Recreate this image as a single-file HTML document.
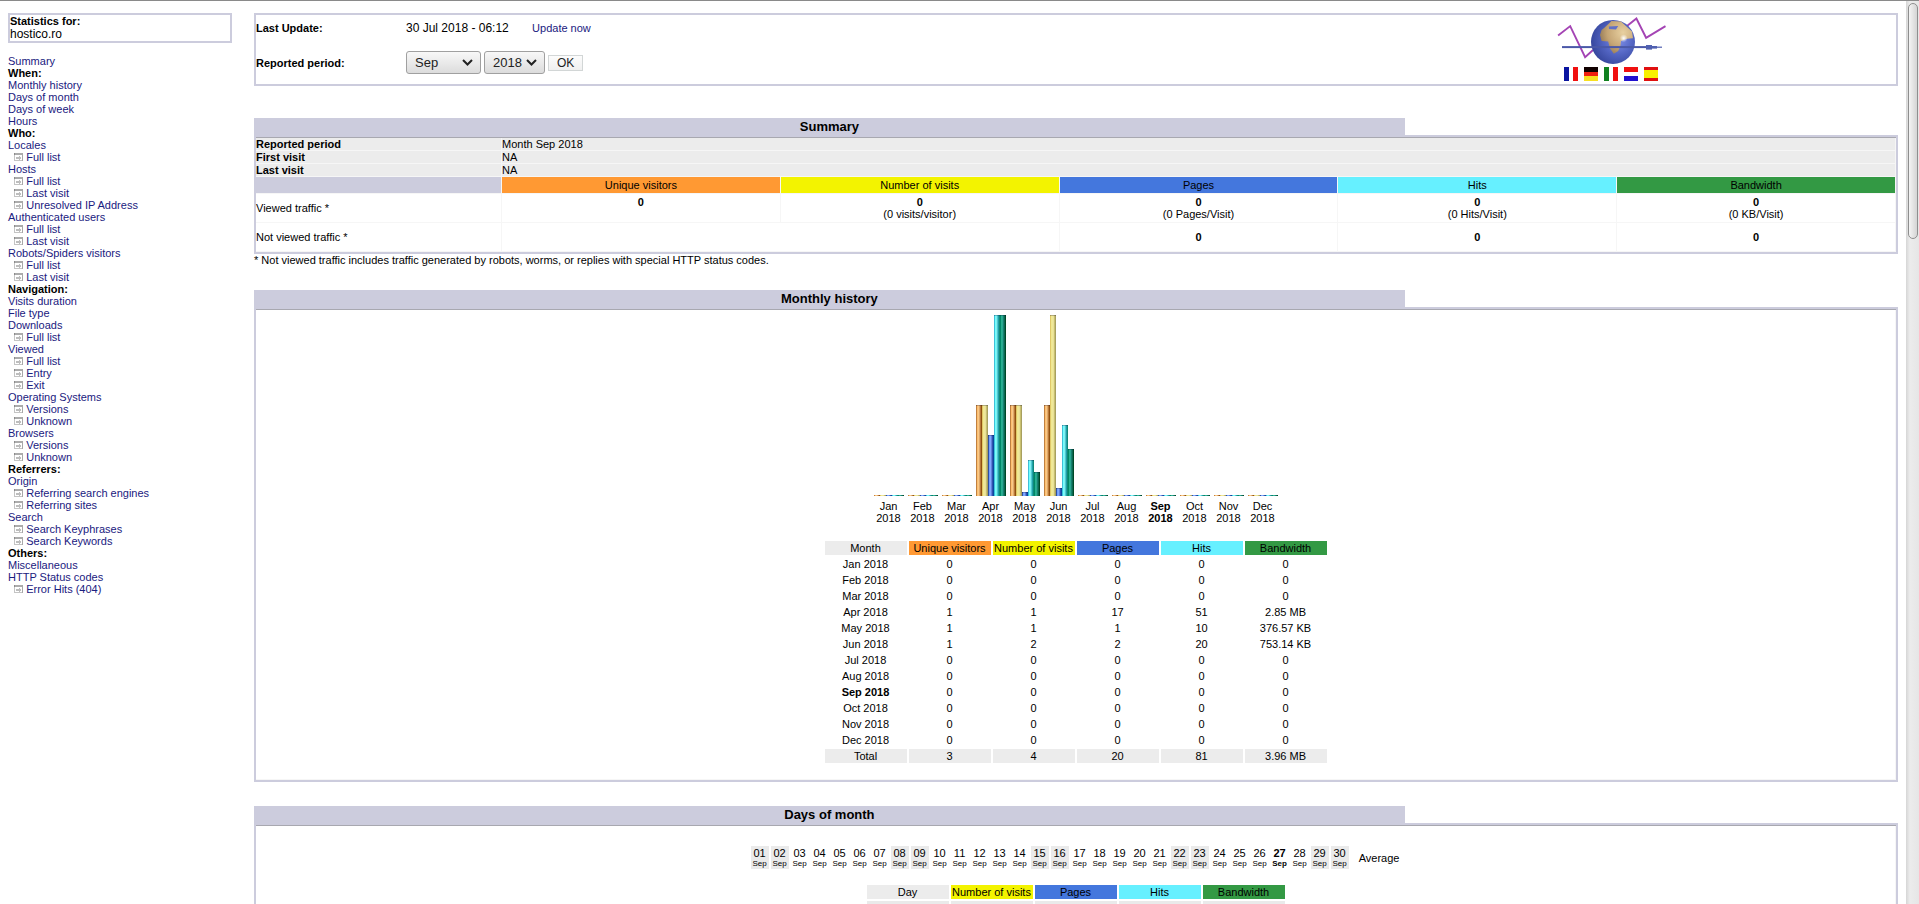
<html><head><meta charset="utf-8">
<style>
html,body{margin:0;padding:0;background:#fff;overflow:hidden;}
body{width:1919px;height:904px;position:relative;font:11px "Liberation Sans",sans-serif;}
#topline{position:absolute;left:0;top:0;width:1919px;height:1px;background:#8a8a8a;}
.frame{position:absolute;top:1px;overflow:hidden;}
#left{left:0;width:240px;height:903px;}
#main{left:246px;width:1660px;height:903px;}
.fb{margin:0 8px;}
#sb{position:absolute;left:1906px;top:1px;width:13px;height:903px;background:linear-gradient(to right,#d6d6d6,#ececec 30%,#e6e6e6);}
#thumb{position:absolute;left:2px;top:2px;width:8px;height:234px;border:1px solid #8e8e8e;border-radius:5px;background:linear-gradient(to right,#f4f4f4,#d4d4d4);}
.aws_border{border-collapse:collapse;background-color:#CCCCDD;padding:1px;margin-top:0;margin-bottom:0;}
.aws_title{font:bold 13px "Liberation Sans",sans-serif;background-color:#CCCCDD;text-align:center;margin:0;padding:1px;color:#000;}
.aws_blank{font:13px "Liberation Sans",sans-serif;background-color:#FFFFFF;text-align:center;margin-bottom:0;padding:1px;}
.aws_data{background-color:#FFFFFF;border-top-width:1px;border-left-width:0;border-right-width:0;border-bottom-width:0;}
.aws_formfield{font:13px "Liberation Sans",sans-serif;}
.aws_button{font-family:"Liberation Sans",sans-serif;font-size:12px;border:1px solid #ccd7e0;background:#fff;}
th{border-color:#ECECEC;border-left-width:0;border-right-width:1px;border-top-width:0;border-bottom-width:1px;padding:1px 2px 1px 1px;font:11px "Liberation Sans",sans-serif;text-align:center;color:#000;}
td{border-color:#ECECEC;border-left-width:0;border-right-width:1px;border-top-width:0;border-bottom-width:1px;font:11px "Liberation Sans",sans-serif;text-align:center;color:#000;}
td.aws{text-align:left;padding:0;}
td.awsm{border-width:0;text-align:left;padding:0;}
b{font-weight:bold;}
a{font:11px "Liberation Sans",sans-serif;color:#1a2080;text-decoration:none;}
.ico{display:inline-block;vertical-align:baseline;}
.b{display:inline-block;width:6px;vertical-align:bottom;}
.b0{display:inline-block;width:4px;height:0;vertical-align:bottom;}
.vu{background:linear-gradient(to right,#c08040 0px 1px,#ffc070 1px 2px,#f8c888 2px 3px,#e0a868 3px 4px,#b87838 4px 5px,#905010 5px 6px);}
.vv{background:linear-gradient(to right,#e0c868 0px 1px,#f0e890 1px 2px,#f0e898 2px 3px,#e8e098 3px 4px,#c8c070 4px 5px,#a8a060 5px 6px);}
.vp{background:linear-gradient(to right,#3050a0 0px 1px,#70a0ff 1px 2px,#80a8ff 2px 3px,#6080d8 3px 4px,#3050b0 4px 5px,#0848a0 5px 6px);}
.vh{background:linear-gradient(to right,#40c0d8 0px 1px,#70ffff 1px 2px,#80f0f0 2px 3px,#50c8d0 3px 4px,#20a0a8 4px 5px,#108878 5px 6px);}
.vk{background:linear-gradient(to right,#008868 0px 1px,#28b090 1px 2px,#28a890 2px 3px,#188070 3px 4px,#0a6850 4px 5px,#004828 5px 6px);}
.b{box-shadow:inset 0 1px 0 rgba(0,0,40,0.25);}
.b.z{box-shadow:none;}
.sel{display:inline-block;position:relative;box-sizing:border-box;height:23px;line-height:21px;padding-left:8px;border:1px solid #a0a0a0;border-radius:3px;background:linear-gradient(#f8f8f8,#dcdcdc);font-size:13px;color:#222;vertical-align:middle;}
.chev{position:absolute;right:7px;top:7px;}
.btn{display:inline-block;box-sizing:border-box;width:35px;height:16px;border:1px solid #d2d6d6;background:linear-gradient(#fcfcfc,#f0f0f0);color:#222;font-size:12px;text-align:center;vertical-align:middle;}

#logo{position:absolute;left:1550px;top:12px;}

table[border="1"]>tbody>tr>td{border-color:#f6f6f6;}
table.aws_data[border="1"]{border-top-color:#a8a8b0;}

</style></head><body>
<div id="topline"></div>
<div id="left" class="frame"><div class="fb">
<a>&nbsp;</a>
<form style="padding:0;margin:0">
<table class="aws_border" border="0" cellpadding="2" cellspacing="0" width="100%">
<tr><td>
<table class="aws_data" border="0" cellpadding="1" cellspacing="0" width="100%">
<tr><td class="awsm" valign="middle"><b>Statistics for:</b>&nbsp;</td></tr><tr valign="middle"><td class="aws" valign="middle" nowrap><span style="font-size:12px">hostico.ro</span>&nbsp;</td></tr>
</table>
</td></tr></table>
</form><br>
<table cellspacing="0" cellpadding="0" border="0">
<tr><td class="awsm"><a>Summary</a></td></tr>
<tr><td class="awsm"><b>When:</b></td></tr>
<tr><td class="awsm"><a>Monthly history</a></td></tr>
<tr><td class="awsm"><a>Days of month</a></td></tr>
<tr><td class="awsm"><a>Days of week</a></td></tr>
<tr><td class="awsm"><a>Hours</a></td></tr>
<tr><td class="awsm"><b>Who:</b></td></tr>
<tr><td class="awsm"><a>Locales</a></td></tr>
<tr><td class="awsm"> &nbsp; <svg class="ico" width="9" height="8" viewBox="0 0 9 8" shape-rendering="crispEdges"><rect x="0" y="0" width="9" height="8" fill="#c4c4c4"/><rect x="1" y="2" width="7" height="5" fill="#fff"/><rect x="0" y="0" width="9" height="2" fill="#acacac"/><rect x="0" y="0" width="1" height="2" fill="#8c8c8c"/><rect x="8" y="0" width="1" height="8" fill="#a8a8a8"/><rect x="2" y="4" width="3" height="2" fill="#bdbdbd"/><path d="M5 3h1v1h1v2h-1v1h-1z" fill="#bdbdbd"/></svg> <a>Full list</a></td></tr>
<tr><td class="awsm"><a>Hosts</a></td></tr>
<tr><td class="awsm"> &nbsp; <svg class="ico" width="9" height="8" viewBox="0 0 9 8" shape-rendering="crispEdges"><rect x="0" y="0" width="9" height="8" fill="#c4c4c4"/><rect x="1" y="2" width="7" height="5" fill="#fff"/><rect x="0" y="0" width="9" height="2" fill="#acacac"/><rect x="0" y="0" width="1" height="2" fill="#8c8c8c"/><rect x="8" y="0" width="1" height="8" fill="#a8a8a8"/><rect x="2" y="4" width="3" height="2" fill="#bdbdbd"/><path d="M5 3h1v1h1v2h-1v1h-1z" fill="#bdbdbd"/></svg> <a>Full list</a></td></tr>
<tr><td class="awsm"> &nbsp; <svg class="ico" width="9" height="8" viewBox="0 0 9 8" shape-rendering="crispEdges"><rect x="0" y="0" width="9" height="8" fill="#c4c4c4"/><rect x="1" y="2" width="7" height="5" fill="#fff"/><rect x="0" y="0" width="9" height="2" fill="#acacac"/><rect x="0" y="0" width="1" height="2" fill="#8c8c8c"/><rect x="8" y="0" width="1" height="8" fill="#a8a8a8"/><rect x="2" y="4" width="3" height="2" fill="#bdbdbd"/><path d="M5 3h1v1h1v2h-1v1h-1z" fill="#bdbdbd"/></svg> <a>Last visit</a></td></tr>
<tr><td class="awsm"> &nbsp; <svg class="ico" width="9" height="8" viewBox="0 0 9 8" shape-rendering="crispEdges"><rect x="0" y="0" width="9" height="8" fill="#c4c4c4"/><rect x="1" y="2" width="7" height="5" fill="#fff"/><rect x="0" y="0" width="9" height="2" fill="#acacac"/><rect x="0" y="0" width="1" height="2" fill="#8c8c8c"/><rect x="8" y="0" width="1" height="8" fill="#a8a8a8"/><rect x="2" y="4" width="3" height="2" fill="#bdbdbd"/><path d="M5 3h1v1h1v2h-1v1h-1z" fill="#bdbdbd"/></svg> <a>Unresolved IP Address</a></td></tr>
<tr><td class="awsm"><a>Authenticated users</a></td></tr>
<tr><td class="awsm"> &nbsp; <svg class="ico" width="9" height="8" viewBox="0 0 9 8" shape-rendering="crispEdges"><rect x="0" y="0" width="9" height="8" fill="#c4c4c4"/><rect x="1" y="2" width="7" height="5" fill="#fff"/><rect x="0" y="0" width="9" height="2" fill="#acacac"/><rect x="0" y="0" width="1" height="2" fill="#8c8c8c"/><rect x="8" y="0" width="1" height="8" fill="#a8a8a8"/><rect x="2" y="4" width="3" height="2" fill="#bdbdbd"/><path d="M5 3h1v1h1v2h-1v1h-1z" fill="#bdbdbd"/></svg> <a>Full list</a></td></tr>
<tr><td class="awsm"> &nbsp; <svg class="ico" width="9" height="8" viewBox="0 0 9 8" shape-rendering="crispEdges"><rect x="0" y="0" width="9" height="8" fill="#c4c4c4"/><rect x="1" y="2" width="7" height="5" fill="#fff"/><rect x="0" y="0" width="9" height="2" fill="#acacac"/><rect x="0" y="0" width="1" height="2" fill="#8c8c8c"/><rect x="8" y="0" width="1" height="8" fill="#a8a8a8"/><rect x="2" y="4" width="3" height="2" fill="#bdbdbd"/><path d="M5 3h1v1h1v2h-1v1h-1z" fill="#bdbdbd"/></svg> <a>Last visit</a></td></tr>
<tr><td class="awsm"><a>Robots/Spiders visitors</a></td></tr>
<tr><td class="awsm"> &nbsp; <svg class="ico" width="9" height="8" viewBox="0 0 9 8" shape-rendering="crispEdges"><rect x="0" y="0" width="9" height="8" fill="#c4c4c4"/><rect x="1" y="2" width="7" height="5" fill="#fff"/><rect x="0" y="0" width="9" height="2" fill="#acacac"/><rect x="0" y="0" width="1" height="2" fill="#8c8c8c"/><rect x="8" y="0" width="1" height="8" fill="#a8a8a8"/><rect x="2" y="4" width="3" height="2" fill="#bdbdbd"/><path d="M5 3h1v1h1v2h-1v1h-1z" fill="#bdbdbd"/></svg> <a>Full list</a></td></tr>
<tr><td class="awsm"> &nbsp; <svg class="ico" width="9" height="8" viewBox="0 0 9 8" shape-rendering="crispEdges"><rect x="0" y="0" width="9" height="8" fill="#c4c4c4"/><rect x="1" y="2" width="7" height="5" fill="#fff"/><rect x="0" y="0" width="9" height="2" fill="#acacac"/><rect x="0" y="0" width="1" height="2" fill="#8c8c8c"/><rect x="8" y="0" width="1" height="8" fill="#a8a8a8"/><rect x="2" y="4" width="3" height="2" fill="#bdbdbd"/><path d="M5 3h1v1h1v2h-1v1h-1z" fill="#bdbdbd"/></svg> <a>Last visit</a></td></tr>
<tr><td class="awsm"><b>Navigation:</b></td></tr>
<tr><td class="awsm"><a>Visits duration</a></td></tr>
<tr><td class="awsm"><a>File type</a></td></tr>
<tr><td class="awsm"><a>Downloads</a></td></tr>
<tr><td class="awsm"> &nbsp; <svg class="ico" width="9" height="8" viewBox="0 0 9 8" shape-rendering="crispEdges"><rect x="0" y="0" width="9" height="8" fill="#c4c4c4"/><rect x="1" y="2" width="7" height="5" fill="#fff"/><rect x="0" y="0" width="9" height="2" fill="#acacac"/><rect x="0" y="0" width="1" height="2" fill="#8c8c8c"/><rect x="8" y="0" width="1" height="8" fill="#a8a8a8"/><rect x="2" y="4" width="3" height="2" fill="#bdbdbd"/><path d="M5 3h1v1h1v2h-1v1h-1z" fill="#bdbdbd"/></svg> <a>Full list</a></td></tr>
<tr><td class="awsm"><a>Viewed</a></td></tr>
<tr><td class="awsm"> &nbsp; <svg class="ico" width="9" height="8" viewBox="0 0 9 8" shape-rendering="crispEdges"><rect x="0" y="0" width="9" height="8" fill="#c4c4c4"/><rect x="1" y="2" width="7" height="5" fill="#fff"/><rect x="0" y="0" width="9" height="2" fill="#acacac"/><rect x="0" y="0" width="1" height="2" fill="#8c8c8c"/><rect x="8" y="0" width="1" height="8" fill="#a8a8a8"/><rect x="2" y="4" width="3" height="2" fill="#bdbdbd"/><path d="M5 3h1v1h1v2h-1v1h-1z" fill="#bdbdbd"/></svg> <a>Full list</a></td></tr>
<tr><td class="awsm"> &nbsp; <svg class="ico" width="9" height="8" viewBox="0 0 9 8" shape-rendering="crispEdges"><rect x="0" y="0" width="9" height="8" fill="#c4c4c4"/><rect x="1" y="2" width="7" height="5" fill="#fff"/><rect x="0" y="0" width="9" height="2" fill="#acacac"/><rect x="0" y="0" width="1" height="2" fill="#8c8c8c"/><rect x="8" y="0" width="1" height="8" fill="#a8a8a8"/><rect x="2" y="4" width="3" height="2" fill="#bdbdbd"/><path d="M5 3h1v1h1v2h-1v1h-1z" fill="#bdbdbd"/></svg> <a>Entry</a></td></tr>
<tr><td class="awsm"> &nbsp; <svg class="ico" width="9" height="8" viewBox="0 0 9 8" shape-rendering="crispEdges"><rect x="0" y="0" width="9" height="8" fill="#c4c4c4"/><rect x="1" y="2" width="7" height="5" fill="#fff"/><rect x="0" y="0" width="9" height="2" fill="#acacac"/><rect x="0" y="0" width="1" height="2" fill="#8c8c8c"/><rect x="8" y="0" width="1" height="8" fill="#a8a8a8"/><rect x="2" y="4" width="3" height="2" fill="#bdbdbd"/><path d="M5 3h1v1h1v2h-1v1h-1z" fill="#bdbdbd"/></svg> <a>Exit</a></td></tr>
<tr><td class="awsm"><a>Operating Systems</a></td></tr>
<tr><td class="awsm"> &nbsp; <svg class="ico" width="9" height="8" viewBox="0 0 9 8" shape-rendering="crispEdges"><rect x="0" y="0" width="9" height="8" fill="#c4c4c4"/><rect x="1" y="2" width="7" height="5" fill="#fff"/><rect x="0" y="0" width="9" height="2" fill="#acacac"/><rect x="0" y="0" width="1" height="2" fill="#8c8c8c"/><rect x="8" y="0" width="1" height="8" fill="#a8a8a8"/><rect x="2" y="4" width="3" height="2" fill="#bdbdbd"/><path d="M5 3h1v1h1v2h-1v1h-1z" fill="#bdbdbd"/></svg> <a>Versions</a></td></tr>
<tr><td class="awsm"> &nbsp; <svg class="ico" width="9" height="8" viewBox="0 0 9 8" shape-rendering="crispEdges"><rect x="0" y="0" width="9" height="8" fill="#c4c4c4"/><rect x="1" y="2" width="7" height="5" fill="#fff"/><rect x="0" y="0" width="9" height="2" fill="#acacac"/><rect x="0" y="0" width="1" height="2" fill="#8c8c8c"/><rect x="8" y="0" width="1" height="8" fill="#a8a8a8"/><rect x="2" y="4" width="3" height="2" fill="#bdbdbd"/><path d="M5 3h1v1h1v2h-1v1h-1z" fill="#bdbdbd"/></svg> <a>Unknown</a></td></tr>
<tr><td class="awsm"><a>Browsers</a></td></tr>
<tr><td class="awsm"> &nbsp; <svg class="ico" width="9" height="8" viewBox="0 0 9 8" shape-rendering="crispEdges"><rect x="0" y="0" width="9" height="8" fill="#c4c4c4"/><rect x="1" y="2" width="7" height="5" fill="#fff"/><rect x="0" y="0" width="9" height="2" fill="#acacac"/><rect x="0" y="0" width="1" height="2" fill="#8c8c8c"/><rect x="8" y="0" width="1" height="8" fill="#a8a8a8"/><rect x="2" y="4" width="3" height="2" fill="#bdbdbd"/><path d="M5 3h1v1h1v2h-1v1h-1z" fill="#bdbdbd"/></svg> <a>Versions</a></td></tr>
<tr><td class="awsm"> &nbsp; <svg class="ico" width="9" height="8" viewBox="0 0 9 8" shape-rendering="crispEdges"><rect x="0" y="0" width="9" height="8" fill="#c4c4c4"/><rect x="1" y="2" width="7" height="5" fill="#fff"/><rect x="0" y="0" width="9" height="2" fill="#acacac"/><rect x="0" y="0" width="1" height="2" fill="#8c8c8c"/><rect x="8" y="0" width="1" height="8" fill="#a8a8a8"/><rect x="2" y="4" width="3" height="2" fill="#bdbdbd"/><path d="M5 3h1v1h1v2h-1v1h-1z" fill="#bdbdbd"/></svg> <a>Unknown</a></td></tr>
<tr><td class="awsm"><b>Referrers:</b></td></tr>
<tr><td class="awsm"><a>Origin</a></td></tr>
<tr><td class="awsm"> &nbsp; <svg class="ico" width="9" height="8" viewBox="0 0 9 8" shape-rendering="crispEdges"><rect x="0" y="0" width="9" height="8" fill="#c4c4c4"/><rect x="1" y="2" width="7" height="5" fill="#fff"/><rect x="0" y="0" width="9" height="2" fill="#acacac"/><rect x="0" y="0" width="1" height="2" fill="#8c8c8c"/><rect x="8" y="0" width="1" height="8" fill="#a8a8a8"/><rect x="2" y="4" width="3" height="2" fill="#bdbdbd"/><path d="M5 3h1v1h1v2h-1v1h-1z" fill="#bdbdbd"/></svg> <a>Referring search engines</a></td></tr>
<tr><td class="awsm"> &nbsp; <svg class="ico" width="9" height="8" viewBox="0 0 9 8" shape-rendering="crispEdges"><rect x="0" y="0" width="9" height="8" fill="#c4c4c4"/><rect x="1" y="2" width="7" height="5" fill="#fff"/><rect x="0" y="0" width="9" height="2" fill="#acacac"/><rect x="0" y="0" width="1" height="2" fill="#8c8c8c"/><rect x="8" y="0" width="1" height="8" fill="#a8a8a8"/><rect x="2" y="4" width="3" height="2" fill="#bdbdbd"/><path d="M5 3h1v1h1v2h-1v1h-1z" fill="#bdbdbd"/></svg> <a>Referring sites</a></td></tr>
<tr><td class="awsm"><a>Search</a></td></tr>
<tr><td class="awsm"> &nbsp; <svg class="ico" width="9" height="8" viewBox="0 0 9 8" shape-rendering="crispEdges"><rect x="0" y="0" width="9" height="8" fill="#c4c4c4"/><rect x="1" y="2" width="7" height="5" fill="#fff"/><rect x="0" y="0" width="9" height="2" fill="#acacac"/><rect x="0" y="0" width="1" height="2" fill="#8c8c8c"/><rect x="8" y="0" width="1" height="8" fill="#a8a8a8"/><rect x="2" y="4" width="3" height="2" fill="#bdbdbd"/><path d="M5 3h1v1h1v2h-1v1h-1z" fill="#bdbdbd"/></svg> <a>Search Keyphrases</a></td></tr>
<tr><td class="awsm"> &nbsp; <svg class="ico" width="9" height="8" viewBox="0 0 9 8" shape-rendering="crispEdges"><rect x="0" y="0" width="9" height="8" fill="#c4c4c4"/><rect x="1" y="2" width="7" height="5" fill="#fff"/><rect x="0" y="0" width="9" height="2" fill="#acacac"/><rect x="0" y="0" width="1" height="2" fill="#8c8c8c"/><rect x="8" y="0" width="1" height="8" fill="#a8a8a8"/><rect x="2" y="4" width="3" height="2" fill="#bdbdbd"/><path d="M5 3h1v1h1v2h-1v1h-1z" fill="#bdbdbd"/></svg> <a>Search Keywords</a></td></tr>
<tr><td class="awsm"><b>Others:</b></td></tr>
<tr><td class="awsm"><a>Miscellaneous</a></td></tr>
<tr><td class="awsm"><a>HTTP Status codes</a></td></tr>
<tr><td class="awsm"> &nbsp; <svg class="ico" width="9" height="8" viewBox="0 0 9 8" shape-rendering="crispEdges"><rect x="0" y="0" width="9" height="8" fill="#c4c4c4"/><rect x="1" y="2" width="7" height="5" fill="#fff"/><rect x="0" y="0" width="9" height="2" fill="#acacac"/><rect x="0" y="0" width="1" height="2" fill="#8c8c8c"/><rect x="8" y="0" width="1" height="8" fill="#a8a8a8"/><rect x="2" y="4" width="3" height="2" fill="#bdbdbd"/><path d="M5 3h1v1h1v2h-1v1h-1z" fill="#bdbdbd"/></svg> <a>Error Hits (404)</a></td></tr>
</table>
</div></div>
<div id="main" class="frame"><div class="fb">
<a>&nbsp;</a>
<form style="padding:0 0 20px 0;margin:0">
<table class="aws_border" border="0" cellpadding="2" cellspacing="0" width="100%">
<tr><td>
<table class="aws_data" border="0" cellpadding="1" cellspacing="0" width="100%" style="height:69px;position:relative">
<tr valign="middle"><td class="aws" valign="middle" width="150"><b>Last Update:</b>&nbsp;</td><td class="aws" valign="middle"><span style="font-size:12px;">30 Jul 2018 - 06:12</span>&nbsp; &nbsp; &nbsp; <a style="padding-left:5px">Update now</a></td><td rowspan="2" style="border:0"></td></tr>
<tr valign="middle"><td class="aws" valign="middle" width="150"><b>Reported period:</b></td><td class="aws" valign="middle"><span class="sel" style="width:75px">Sep<svg class="chev" width="11" height="7" viewBox="0 0 11 7"><path d="M1 1L5.5 5.5L10 1" fill="none" stroke="#222" stroke-width="2"/></svg></span> <span class="sel" style="width:61px">2018<svg class="chev" width="11" height="7" viewBox="0 0 11 7"><path d="M1 1L5.5 5.5L10 1" fill="none" stroke="#222" stroke-width="2"/></svg></span> <span class="btn">OK</span></td></tr>
</table>
</td></tr></table>
</form>
<a>&nbsp;</a>
<table class="aws_border" border="0" cellpadding="2" cellspacing="0" width="100%">
<tr><td class="aws_title" width="70%">Summary </td><td class="aws_blank">&nbsp;</td></tr>
<tr><td colspan="2">
<table class="aws_data" border="1" cellpadding="2" cellspacing="0" width="100%">
<tr bgcolor="#ECECEC"><td class="aws"><b>Reported period</b></td><td class="aws" colspan="5">Month Sep 2018</td></tr>
<tr bgcolor="#ECECEC"><td class="aws"><b>First visit</b></td><td class="aws" colspan="5">NA</td></tr>
<tr bgcolor="#ECECEC"><td class="aws"><b>Last visit</b></td><td class="aws" colspan="5">NA</td></tr>
<tr><td bgcolor="#CCCCDD">&nbsp;</td><td width="17%" bgcolor="#FF9933">Unique visitors</td><td width="17%" bgcolor="#F3F300">Number of visits</td><td width="17%" bgcolor="#4477DD">Pages</td><td width="17%" bgcolor="#66F0FF">Hits</td><td width="17%" bgcolor="#339944">Bandwidth</td></tr>
<tr><td class="aws">Viewed traffic&nbsp;*</td><td><b>0</b><br>&nbsp;</td><td><b>0</b><br>(0&nbsp;visits/visitor)</td><td><b>0</b><br>(0&nbsp;Pages/Visit)</td><td><b>0</b><br>(0&nbsp;Hits/Visit)</td><td><b>0</b><br>(0&nbsp;KB/Visit)</td></tr>
<tr><td class="aws">Not viewed traffic&nbsp;*</td><td colspan="2">&nbsp;<br>&nbsp;</td><td><b>0</b></td><td><b>0</b></td><td><b>0</b></td></tr>
</table></td></tr></table>
<span>* Not viewed traffic includes traffic generated by robots, worms, or replies with special HTTP status codes.</span><br>
<br>
<a>&nbsp;</a>
<table class="aws_border" border="0" cellpadding="2" cellspacing="0" width="100%">
<tr><td class="aws_title" width="70%">Monthly history </td><td class="aws_blank">&nbsp;</td></tr>
<tr><td colspan="2">
<table class="aws_data" border="1" cellpadding="2" cellspacing="0" width="100%">
<tr><td align="center">
<center>
<table>
<tr valign="bottom"><td>&nbsp;</td>
<td><i class="b vu z" style="height:1px"></i><i class="b vv z" style="height:1px"></i><i class="b vp z" style="height:1px"></i><i class="b vh z" style="height:1px"></i><i class="b vk z" style="height:1px"></i></td>
<td><i class="b vu z" style="height:1px"></i><i class="b vv z" style="height:1px"></i><i class="b vp z" style="height:1px"></i><i class="b vh z" style="height:1px"></i><i class="b vk z" style="height:1px"></i></td>
<td><i class="b vu z" style="height:1px"></i><i class="b vv z" style="height:1px"></i><i class="b vp z" style="height:1px"></i><i class="b vh z" style="height:1px"></i><i class="b vk z" style="height:1px"></i></td>
<td><i class="b vu" style="height:91px"></i><i class="b vv" style="height:91px"></i><i class="b vp" style="height:61px"></i><i class="b vh" style="height:181px"></i><i class="b vk" style="height:181px"></i></td>
<td><i class="b vu" style="height:91px"></i><i class="b vv" style="height:91px"></i><i class="b vp" style="height:4px"></i><i class="b vh" style="height:36px"></i><i class="b vk" style="height:24px"></i></td>
<td><i class="b vu" style="height:91px"></i><i class="b vv" style="height:181px"></i><i class="b vp" style="height:8px"></i><i class="b vh" style="height:71px"></i><i class="b vk" style="height:47px"></i></td>
<td><i class="b vu z" style="height:1px"></i><i class="b vv z" style="height:1px"></i><i class="b vp z" style="height:1px"></i><i class="b vh z" style="height:1px"></i><i class="b vk z" style="height:1px"></i></td>
<td><i class="b vu z" style="height:1px"></i><i class="b vv z" style="height:1px"></i><i class="b vp z" style="height:1px"></i><i class="b vh z" style="height:1px"></i><i class="b vk z" style="height:1px"></i></td>
<td><i class="b vu z" style="height:1px"></i><i class="b vv z" style="height:1px"></i><i class="b vp z" style="height:1px"></i><i class="b vh z" style="height:1px"></i><i class="b vk z" style="height:1px"></i></td>
<td><i class="b vu z" style="height:1px"></i><i class="b vv z" style="height:1px"></i><i class="b vp z" style="height:1px"></i><i class="b vh z" style="height:1px"></i><i class="b vk z" style="height:1px"></i></td>
<td><i class="b vu z" style="height:1px"></i><i class="b vv z" style="height:1px"></i><i class="b vp z" style="height:1px"></i><i class="b vh z" style="height:1px"></i><i class="b vk z" style="height:1px"></i></td>
<td><i class="b vu z" style="height:1px"></i><i class="b vv z" style="height:1px"></i><i class="b vp z" style="height:1px"></i><i class="b vh z" style="height:1px"></i><i class="b vk z" style="height:1px"></i></td>
<td>&nbsp;</td></tr>
<tr valign="middle"><td>&nbsp;</td>
<td>Jan<br>2018</td>
<td>Feb<br>2018</td>
<td>Mar<br>2018</td>
<td>Apr<br>2018</td>
<td>May<br>2018</td>
<td>Jun<br>2018</td>
<td>Jul<br>2018</td>
<td>Aug<br>2018</td>
<td><b>Sep<br>2018</b></td>
<td>Oct<br>2018</td>
<td>Nov<br>2018</td>
<td>Dec<br>2018</td>
<td>&nbsp;</td></tr>
</table>
<br>
<table>
<tr><td width="80" bgcolor="#ECECEC">Month</td><td width="80" bgcolor="#FF9933">Unique visitors</td><td width="80" bgcolor="#F3F300">Number of visits</td><td width="80" bgcolor="#4477DD">Pages</td><td width="80" bgcolor="#66F0FF">Hits</td><td width="80" bgcolor="#339944">Bandwidth</td></tr>
<tr><td>Jan 2018</td><td>0</td><td>0</td><td>0</td><td>0</td><td>0</td></tr>
<tr><td>Feb 2018</td><td>0</td><td>0</td><td>0</td><td>0</td><td>0</td></tr>
<tr><td>Mar 2018</td><td>0</td><td>0</td><td>0</td><td>0</td><td>0</td></tr>
<tr><td>Apr 2018</td><td>1</td><td>1</td><td>17</td><td>51</td><td>2.85 MB</td></tr>
<tr><td>May 2018</td><td>1</td><td>1</td><td>1</td><td>10</td><td>376.57 KB</td></tr>
<tr><td>Jun 2018</td><td>1</td><td>2</td><td>2</td><td>20</td><td>753.14 KB</td></tr>
<tr><td>Jul 2018</td><td>0</td><td>0</td><td>0</td><td>0</td><td>0</td></tr>
<tr><td>Aug 2018</td><td>0</td><td>0</td><td>0</td><td>0</td><td>0</td></tr>
<tr><td><b>Sep 2018</b></td><td>0</td><td>0</td><td>0</td><td>0</td><td>0</td></tr>
<tr><td>Oct 2018</td><td>0</td><td>0</td><td>0</td><td>0</td><td>0</td></tr>
<tr><td>Nov 2018</td><td>0</td><td>0</td><td>0</td><td>0</td><td>0</td></tr>
<tr><td>Dec 2018</td><td>0</td><td>0</td><td>0</td><td>0</td><td>0</td></tr>
<tr><td bgcolor="#ECECEC">Total</td><td bgcolor="#ECECEC">3</td><td bgcolor="#ECECEC">4</td><td bgcolor="#ECECEC">20</td><td bgcolor="#ECECEC">81</td><td bgcolor="#ECECEC">3.96 MB</td></tr>
</table>
<br>
</center>
</td></tr>
</table></td></tr></table><br>
<a>&nbsp;</a>
<table class="aws_border" border="0" cellpadding="2" cellspacing="0" width="100%">
<tr><td class="aws_title" width="70%">Days of month </td><td class="aws_blank">&nbsp;</td></tr>
<tr><td colspan="2">
<table class="aws_data" border="1" cellpadding="2" cellspacing="0" width="100%">
<tr><td align="center">
<center>
<table>
<tr valign="bottom">
<td><i class="b0"></i><i class="b0"></i><i class="b0"></i><i class="b0"></i></td>
<td><i class="b0"></i><i class="b0"></i><i class="b0"></i><i class="b0"></i></td>
<td><i class="b0"></i><i class="b0"></i><i class="b0"></i><i class="b0"></i></td>
<td><i class="b0"></i><i class="b0"></i><i class="b0"></i><i class="b0"></i></td>
<td><i class="b0"></i><i class="b0"></i><i class="b0"></i><i class="b0"></i></td>
<td><i class="b0"></i><i class="b0"></i><i class="b0"></i><i class="b0"></i></td>
<td><i class="b0"></i><i class="b0"></i><i class="b0"></i><i class="b0"></i></td>
<td><i class="b0"></i><i class="b0"></i><i class="b0"></i><i class="b0"></i></td>
<td><i class="b0"></i><i class="b0"></i><i class="b0"></i><i class="b0"></i></td>
<td><i class="b0"></i><i class="b0"></i><i class="b0"></i><i class="b0"></i></td>
<td><i class="b0"></i><i class="b0"></i><i class="b0"></i><i class="b0"></i></td>
<td><i class="b0"></i><i class="b0"></i><i class="b0"></i><i class="b0"></i></td>
<td><i class="b0"></i><i class="b0"></i><i class="b0"></i><i class="b0"></i></td>
<td><i class="b0"></i><i class="b0"></i><i class="b0"></i><i class="b0"></i></td>
<td><i class="b0"></i><i class="b0"></i><i class="b0"></i><i class="b0"></i></td>
<td><i class="b0"></i><i class="b0"></i><i class="b0"></i><i class="b0"></i></td>
<td><i class="b0"></i><i class="b0"></i><i class="b0"></i><i class="b0"></i></td>
<td><i class="b0"></i><i class="b0"></i><i class="b0"></i><i class="b0"></i></td>
<td><i class="b0"></i><i class="b0"></i><i class="b0"></i><i class="b0"></i></td>
<td><i class="b0"></i><i class="b0"></i><i class="b0"></i><i class="b0"></i></td>
<td><i class="b0"></i><i class="b0"></i><i class="b0"></i><i class="b0"></i></td>
<td><i class="b0"></i><i class="b0"></i><i class="b0"></i><i class="b0"></i></td>
<td><i class="b0"></i><i class="b0"></i><i class="b0"></i><i class="b0"></i></td>
<td><i class="b0"></i><i class="b0"></i><i class="b0"></i><i class="b0"></i></td>
<td><i class="b0"></i><i class="b0"></i><i class="b0"></i><i class="b0"></i></td>
<td><i class="b0"></i><i class="b0"></i><i class="b0"></i><i class="b0"></i></td>
<td><i class="b0"></i><i class="b0"></i><i class="b0"></i><i class="b0"></i></td>
<td><i class="b0"></i><i class="b0"></i><i class="b0"></i><i class="b0"></i></td>
<td><i class="b0"></i><i class="b0"></i><i class="b0"></i><i class="b0"></i></td>
<td><i class="b0"></i><i class="b0"></i><i class="b0"></i><i class="b0"></i></td>
<td>&nbsp;</td><td><i class="b0"></i><i class="b0"></i><i class="b0"></i><i class="b0"></i></td>
</tr>
<tr valign="middle">
<td bgcolor="#EAEAEA">01<br><span style="font-size:8px;">Sep</span></td>
<td bgcolor="#EAEAEA">02<br><span style="font-size:8px;">Sep</span></td>
<td>03<br><span style="font-size:8px;">Sep</span></td>
<td>04<br><span style="font-size:8px;">Sep</span></td>
<td>05<br><span style="font-size:8px;">Sep</span></td>
<td>06<br><span style="font-size:8px;">Sep</span></td>
<td>07<br><span style="font-size:8px;">Sep</span></td>
<td bgcolor="#EAEAEA">08<br><span style="font-size:8px;">Sep</span></td>
<td bgcolor="#EAEAEA">09<br><span style="font-size:8px;">Sep</span></td>
<td>10<br><span style="font-size:8px;">Sep</span></td>
<td>11<br><span style="font-size:8px;">Sep</span></td>
<td>12<br><span style="font-size:8px;">Sep</span></td>
<td>13<br><span style="font-size:8px;">Sep</span></td>
<td>14<br><span style="font-size:8px;">Sep</span></td>
<td bgcolor="#EAEAEA">15<br><span style="font-size:8px;">Sep</span></td>
<td bgcolor="#EAEAEA">16<br><span style="font-size:8px;">Sep</span></td>
<td>17<br><span style="font-size:8px;">Sep</span></td>
<td>18<br><span style="font-size:8px;">Sep</span></td>
<td>19<br><span style="font-size:8px;">Sep</span></td>
<td>20<br><span style="font-size:8px;">Sep</span></td>
<td>21<br><span style="font-size:8px;">Sep</span></td>
<td bgcolor="#EAEAEA">22<br><span style="font-size:8px;">Sep</span></td>
<td bgcolor="#EAEAEA">23<br><span style="font-size:8px;">Sep</span></td>
<td>24<br><span style="font-size:8px;">Sep</span></td>
<td>25<br><span style="font-size:8px;">Sep</span></td>
<td>26<br><span style="font-size:8px;">Sep</span></td>
<td><b>27<br><span style="font-size:8px;">Sep</span></b></td>
<td>28<br><span style="font-size:8px;">Sep</span></td>
<td bgcolor="#EAEAEA">29<br><span style="font-size:8px;">Sep</span></td>
<td bgcolor="#EAEAEA">30<br><span style="font-size:8px;">Sep</span></td>
<td>&nbsp;</td><td valign="middle">Average</td>
</tr>
</table>
<br>
<table>
<tr><td width="80" bgcolor="#ECECEC">Day</td><td width="80" bgcolor="#F3F300">Number of visits</td><td width="80" bgcolor="#4477DD">Pages</td><td width="80" bgcolor="#66F0FF">Hits</td><td width="80" bgcolor="#339944">Bandwidth</td></tr>
<tr bgcolor="#EAEAEA"><td>01 Sep 2018</td><td>0</td><td>0</td><td>0</td><td>0</td></tr>
<tr bgcolor="#EAEAEA"><td>02 Sep 2018</td><td>0</td><td>0</td><td>0</td><td>0</td></tr>
<tr><td>03 Sep 2018</td><td>0</td><td>0</td><td>0</td><td>0</td></tr>
<tr><td>04 Sep 2018</td><td>0</td><td>0</td><td>0</td><td>0</td></tr>
<tr><td>05 Sep 2018</td><td>0</td><td>0</td><td>0</td><td>0</td></tr>
<tr><td>06 Sep 2018</td><td>0</td><td>0</td><td>0</td><td>0</td></tr>
<tr><td>07 Sep 2018</td><td>0</td><td>0</td><td>0</td><td>0</td></tr>
<tr bgcolor="#EAEAEA"><td>08 Sep 2018</td><td>0</td><td>0</td><td>0</td><td>0</td></tr>
<tr bgcolor="#EAEAEA"><td>09 Sep 2018</td><td>0</td><td>0</td><td>0</td><td>0</td></tr>
<tr><td>10 Sep 2018</td><td>0</td><td>0</td><td>0</td><td>0</td></tr>
<tr><td>11 Sep 2018</td><td>0</td><td>0</td><td>0</td><td>0</td></tr>
<tr><td>12 Sep 2018</td><td>0</td><td>0</td><td>0</td><td>0</td></tr>
<tr><td>13 Sep 2018</td><td>0</td><td>0</td><td>0</td><td>0</td></tr>
<tr><td>14 Sep 2018</td><td>0</td><td>0</td><td>0</td><td>0</td></tr>
<tr bgcolor="#EAEAEA"><td>15 Sep 2018</td><td>0</td><td>0</td><td>0</td><td>0</td></tr>
<tr bgcolor="#EAEAEA"><td>16 Sep 2018</td><td>0</td><td>0</td><td>0</td><td>0</td></tr>
<tr><td>17 Sep 2018</td><td>0</td><td>0</td><td>0</td><td>0</td></tr>
<tr><td>18 Sep 2018</td><td>0</td><td>0</td><td>0</td><td>0</td></tr>
<tr><td>19 Sep 2018</td><td>0</td><td>0</td><td>0</td><td>0</td></tr>
<tr><td>20 Sep 2018</td><td>0</td><td>0</td><td>0</td><td>0</td></tr>
<tr><td>21 Sep 2018</td><td>0</td><td>0</td><td>0</td><td>0</td></tr>
<tr bgcolor="#EAEAEA"><td>22 Sep 2018</td><td>0</td><td>0</td><td>0</td><td>0</td></tr>
<tr bgcolor="#EAEAEA"><td>23 Sep 2018</td><td>0</td><td>0</td><td>0</td><td>0</td></tr>
<tr><td>24 Sep 2018</td><td>0</td><td>0</td><td>0</td><td>0</td></tr>
<tr><td>25 Sep 2018</td><td>0</td><td>0</td><td>0</td><td>0</td></tr>
<tr><td>26 Sep 2018</td><td>0</td><td>0</td><td>0</td><td>0</td></tr>
<tr><td>27 Sep 2018</td><td>0</td><td>0</td><td>0</td><td>0</td></tr>
<tr><td>28 Sep 2018</td><td>0</td><td>0</td><td>0</td><td>0</td></tr>
<tr bgcolor="#EAEAEA"><td>29 Sep 2018</td><td>0</td><td>0</td><td>0</td><td>0</td></tr>
<tr bgcolor="#EAEAEA"><td>30 Sep 2018</td><td>0</td><td>0</td><td>0</td><td>0</td></tr>
</table>
</center>
</td></tr>
</table></td></tr></table>
</div></div>
<div id="sb"><div id="thumb"></div></div>
<svg id="logo" width="120" height="73" viewBox="0 0 120 73">
<defs>
<radialGradient id="gb" cx="0.62" cy="0.45" r="0.65">
<stop offset="0" stop-color="#8090e8"/><stop offset="0.5" stop-color="#5466c4"/><stop offset="1" stop-color="#34449a"/>
</radialGradient>
<radialGradient id="gl" cx="0.7" cy="0.35" r="0.8">
<stop offset="0" stop-color="#e8d0a0"/><stop offset="0.6" stop-color="#c4a474"/><stop offset="1" stop-color="#8a7050"/>
</radialGradient>
<radialGradient id="hl" cx="0.5" cy="0.5" r="0.5">
<stop offset="0" stop-color="#fff" stop-opacity="1"/><stop offset="1" stop-color="#fff" stop-opacity="0"/>
</radialGradient>
</defs>
<polyline points="8.1,23.4 20.2,14.1 35.1,45.2 43,38" fill="none" stroke="#a444b4" stroke-width="1.9"/>
<polyline points="77,14 86.4,6.5 96.1,25.8 115.5,14.1" fill="none" stroke="#a444b4" stroke-width="1.9"/>
<circle cx="63" cy="29.9" r="22" fill="url(#gb)"/>
<path d="M54.4,15.7 L61.5,9.1 L71,9.6 L82,19.6 L83,26.2 L77,26.8 L71,29 L70.4,34 L68.2,39 L63.8,41.7 L59.9,36.2 L58.2,29.5 L51.6,29 L50,22.9 L51.6,18 Z" fill="url(#gl)"/>
<path d="M58.8,14.5 L68.2,14 L66,17.4 L59,17 Z" fill="#6070c8"/>
<circle cx="73.7" cy="26.2" r="4" fill="url(#hl)"/>
<rect x="12" y="34.1" width="85" height="2" fill="#4a58a8"/>
<rect x="96" y="33" width="6" height="4.6" fill="#5060b0"/>
<rect x="102" y="34" width="5" height="2.6" fill="#5060b0"/>
<rect x="107" y="34.6" width="5" height="1.2" fill="#5060b0"/>
<g shape-rendering="crispEdges">
<rect x="14" y="55" width="5" height="14" fill="#0a14a0"/><rect x="19" y="55" width="4" height="14" fill="#fff"/><rect x="23" y="55" width="5" height="14" fill="#f01010"/>
<rect x="34" y="55" width="14" height="5" fill="#100000"/><rect x="34" y="60" width="14" height="4" fill="#f02010"/><rect x="34" y="64" width="14" height="5" fill="#f8e020"/>
<rect x="54" y="55" width="5" height="14" fill="#108020"/><rect x="59" y="55" width="4" height="14" fill="#fff"/><rect x="63" y="55" width="5" height="14" fill="#f01010"/>
<rect x="74" y="55" width="14" height="5" fill="#f01010"/><rect x="74" y="60" width="14" height="4" fill="#fff"/><rect x="74" y="64" width="14" height="5" fill="#2010d0"/>
<rect x="94" y="55" width="14" height="3" fill="#e01010"/><rect x="94" y="58" width="14" height="8" fill="#f8f000"/><rect x="94" y="66" width="14" height="3" fill="#e01010"/>
</g>
</svg>

</body></html>
